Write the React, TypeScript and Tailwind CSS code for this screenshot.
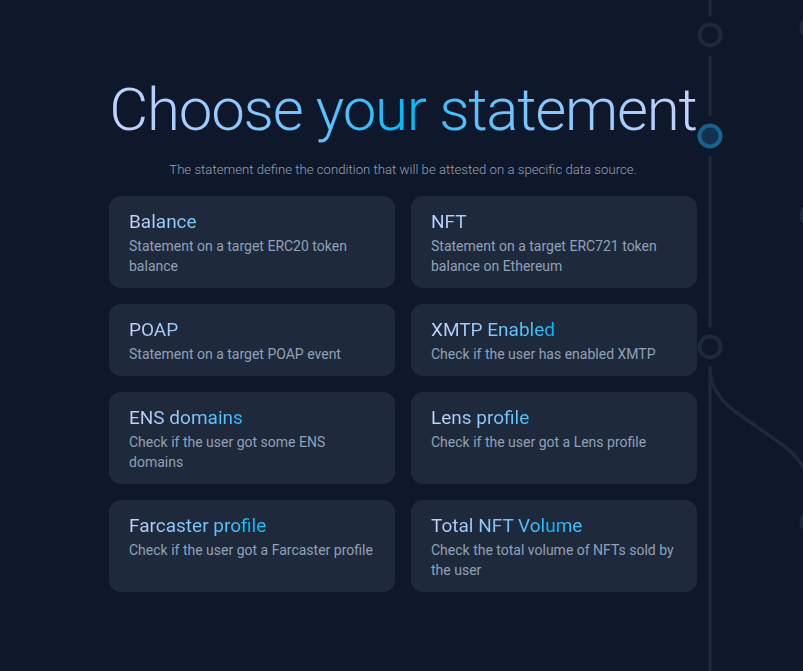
import React from "react";

const cards: { title: string; desc: string }[] = [
  { title: "Balance", desc: "Statement on a target ERC20 token balance" },
  { title: "NFT", desc: "Statement on a target ERC721 token balance on Ethereum" },
  { title: "POAP", desc: "Statement on a target POAP event" },
  { title: "XMTP Enabled", desc: "Check if the user has enabled XMTP" },
  { title: "ENS domains", desc: "Check if the user got some ENS domains" },
  { title: "Lens profile", desc: "Check if the user got a Lens profile" },
  { title: "Farcaster profile", desc: "Check if the user got a Farcaster profile" },
  { title: "Total NFT Volume", desc: "Check the total volume of NFTs sold by the user" },
];

function Decoration() {
  return (
    <svg
      className="absolute left-0 top-0 pointer-events-none"
      width="803"
      height="671"
      viewBox="0 0 803 671"
      fill="none"
    >
      <g stroke="#1e293b" strokeWidth="3.5" strokeLinecap="round">
        <line x1="710" y1="-5" x2="710" y2="15" />
        <line x1="710" y1="57" x2="710" y2="115" />
        <line x1="710" y1="157" x2="710" y2="326" />
        <line x1="710" y1="368" x2="710" y2="680" />
        <path d="M710 368 Q710 395 740 415 L780 443 Q812 465 812 500" />
      </g>
      <circle cx="710" cy="35" r="10.5" stroke="#1e293b" strokeWidth="4" fill="#0f172a" />
      <circle cx="710" cy="136" r="10.5" stroke="#17628f" strokeWidth="4" fill="#14324f" />
      <circle cx="710" cy="347" r="10.5" stroke="#1e293b" strokeWidth="4" fill="#0f172a" />
      <circle cx="812" cy="27" r="10.5" stroke="#1e293b" strokeWidth="4" fill="#0f172a" />
      <circle cx="812" cy="215" r="10.5" stroke="#1e293b" strokeWidth="4" fill="#0f172a" />
      <circle cx="812" cy="522" r="10.5" stroke="#1e293b" strokeWidth="4" fill="#0f172a" />
    </svg>
  );
}

export default function App() {
  return (
    <div
      className="relative w-[803px] h-[671px] overflow-hidden bg-[#0f172a]"
      style={{ fontFamily: "Roboto, 'Noto Sans', sans-serif" }}
    >
      <Decoration />
      <div className="relative ml-[109px] w-[588px] pt-[77px]">
        <div className="flex justify-center whitespace-nowrap">
          <h1 className="inline-block bg-gradient-to-r from-indigo-200 via-sky-400 to-indigo-200 bg-clip-text text-transparent text-[60px] leading-[66px] font-light tracking-[-1.25px]">
            Choose your statement
          </h1>
        </div>
        <p className="mt-[17px] text-center text-[13.2px] leading-5 font-light text-slate-400">
          The statement define the condition that will be attested on a specific data source.
        </p>
        <div className="mt-[16px] grid grid-cols-2 gap-4">
          {cards.map((c) => (
            <div key={c.title} className="rounded-xl bg-[#1e293b] px-5 py-3">
              <div className="bg-gradient-to-r from-indigo-200 via-sky-400 to-indigo-200 bg-clip-text text-transparent text-[19px] leading-7">
                {c.title}
              </div>
              <div className="text-sm leading-5 text-slate-400">{c.desc}</div>
            </div>
          ))}
        </div>
      </div>
    </div>
  );
}
